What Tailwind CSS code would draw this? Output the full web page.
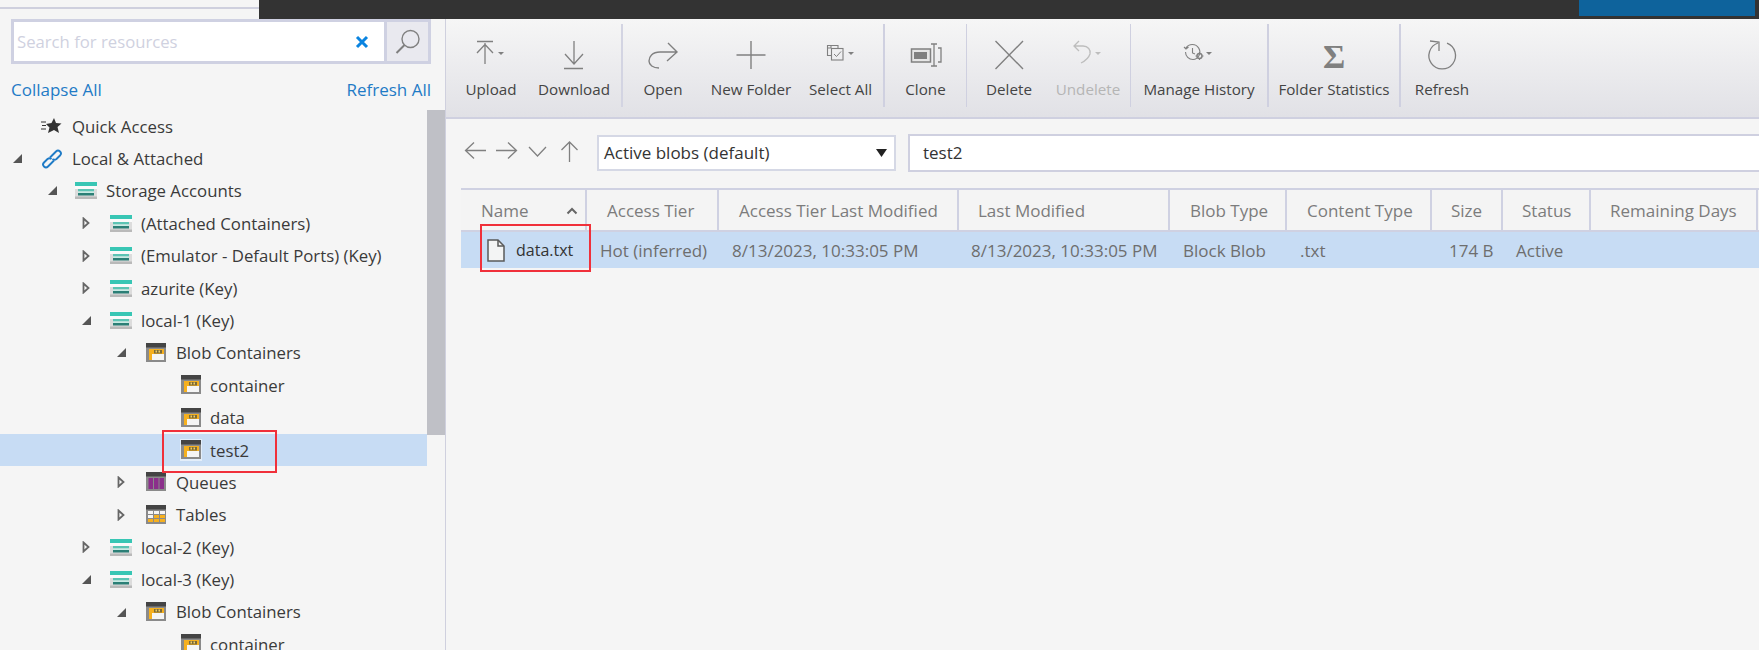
<!DOCTYPE html>
<html lang="en">
<head>
    <meta charset="UTF-8">
    <title>Storage Explorer</title>
    <script src="https://cdn.jsdelivr.net/npm/@tailwindcss/browser@4"></script>
</head>
<body class="bg-[#f5f5f5] font-['Open_Sans',sans-serif] text-[16.8px] text-[#3a3a3a]">
<svg class="hidden">
    <symbol id="storage" viewBox="0 0 22 17">
        <rect x="0" y="0" width="22" height="17" fill="#dcdcdc"/>
        <rect x="0" y="0" width="22" height="4" fill="#38c6b4"/>
        <rect x="0" y="4" width="22" height="3" fill="#fafafa"/>
        <rect x="3" y="7" width="16" height="2.500" fill="#5cc4b4"/>
        <rect x="3" y="9.500" width="16" height="1.500" fill="#c8ebe4"/>
        <rect x="3" y="11" width="16" height="2.500" fill="#2b7f76"/>
        <rect x="0" y="14.500" width="22" height="2.500" fill="#b9b9b9"/>
    </symbol>
    <symbol id="blob" viewBox="0 0 22 20">
        <rect x="1" y="0" width="20" height="19" fill="#8a8a8a"/>
        <rect x="1" y="0" width="20" height="4.500" fill="#444"/>
        <rect x="4" y="6" width="15" height="11" fill="#f6b01e"/>
        <rect x="7" y="11" width="12" height="6" fill="#f5f5f5"/>
        <rect x="9" y="7" width="8" height="3.500" fill="#7a6a3a"/>
        <rect x="10.500" y="7.500" width="1.500" height="2" fill="#f6d060"/>
        <rect x="13.500" y="7.500" width="1.500" height="2" fill="#f6d060"/>
    </symbol>
    <symbol id="open-caret" viewBox="0 0 9 9"><polygon points="9,0 9,9 0,9" fill="#555"/></symbol>
    <symbol id="closed-caret" viewBox="0 0 8 12"><polygon points="1.500,1.500 6.500,6 1.500,10.500" fill="#f5f5f5" stroke="#666" stroke-width="1.800"/></symbol>
</svg>

<div class="w-[1759px] h-[650px] overflow-hidden relative flex flex-col">
    <!-- title strip -->
    <div class="h-[19px] flex shrink-0">
        <div class="w-[259px] pt-[7px]"><div class="h-[2px] bg-[#cfd0de]"></div></div>
        <div class="flex-1 bg-[#333333] flex justify-end pr-[4px]">
            <div class="w-[176px] h-[16px] bg-[#0e639c]"></div>
        </div>
    </div>

    <div class="flex flex-1 min-h-0">
        <!-- sidebar -->
        <div class="w-[446px] shrink-0 border-r border-[#cfd0de] flex flex-col">
            <div class="flex ml-[11px] w-[420px] h-[45px] border-[3px] border-[#cfd1e2]">
                <div class="flex-1 bg-white flex items-center justify-between pl-[3px] pr-[15px]">
                    <span class="text-[#cfd1e0] text-[16.7px]">Search for resources</span>
                    <svg width="14" height="14" viewBox="0 0 14 14"><path d="M2 2 L12 12 M12 2 L2 12" stroke="#0a84e0" stroke-width="3"/></svg>
                </div>
                <div class="w-[44px] bg-[#e9e9ef] border-l-[3px] border-[#cfd1e2] flex items-center justify-center">
                    <svg width="28" height="28" viewBox="0 0 28 28" fill="none" stroke="#808080"><circle cx="16.500" cy="11" r="8.500" stroke-width="1.400"/><path d="M10.500 17 L2.500 25" stroke-width="2"/></svg>
                </div>
            </div>
            <div class="flex justify-between ml-[11px] w-[420px] mt-[13px] h-[26px] items-center text-[#1f7bc6] text-[17px]">
                <span>Collapse All</span><span>Refresh All</span>
            </div>
            <div class="flex flex-1 min-h-0 mt-[7px] overflow-hidden">
                <div class="w-[427px] shrink-0">
                    <div class="h-[32.4px] flex items-center pl-[41px]">
                        <svg class="w-[22px] h-[20px] mr-[9px]" viewBox="0 0 22 20"><path d="M0 6 H5 M1 9.500 H5 M0 13 H5" stroke="#333" stroke-width="1.100"/><polygon points="13,2 15,7 20.500,7.500 16.500,11 18,17 13,14 7,17 8.500,11.500 5,8 10.500,7" fill="#333"/></svg>
                        <span>Quick Access</span>
                    </div>
                    <div class="h-[32.4px] flex items-center pl-[13px]">
                        <svg class="w-[9px] h-[9px] mr-[19px]"><use href="#open-caret"/></svg>
                        <svg class="w-[22px] h-[22px] mr-[9px]" viewBox="0 0 22 22" fill="none" stroke="#1f7bc6" stroke-width="1.900"><path d="M9 9.500 L15 3.500 Q17 1.500 19 3.500 Q21 5.500 19 7.500 L15.500 11 Q13.500 12.500 11.500 11"/><path d="M13 12.500 L7 18.500 Q5 20.500 3 18.500 Q1 16.500 3 14.500 L6.500 11 Q8.500 9.500 10.500 11"/></svg>
                        <span>Local &amp; Attached</span>
                    </div>
                    <div class="h-[32.4px] flex items-center pl-[48px]">
                        <svg class="w-[9px] h-[9px] mr-[18px]"><use href="#open-caret"/></svg>
                        <svg class="w-[22px] h-[17px] mr-[9px]"><use href="#storage"/></svg>
                        <span>Storage Accounts</span>
                    </div>
                    <div class="h-[32.4px] flex items-center pl-[82px]">
                        <svg class="w-[8px] h-[12px] mr-[20px]"><use href="#closed-caret"/></svg>
                        <svg class="w-[22px] h-[17px] mr-[9px]"><use href="#storage"/></svg>
                        <span>(Attached Containers)</span>
                    </div>
                    <div class="h-[32.4px] flex items-center pl-[82px]">
                        <svg class="w-[8px] h-[12px] mr-[20px]"><use href="#closed-caret"/></svg>
                        <svg class="w-[22px] h-[17px] mr-[9px]"><use href="#storage"/></svg>
                        <span>(Emulator - Default Ports) (Key)</span>
                    </div>
                    <div class="h-[32.4px] flex items-center pl-[82px]">
                        <svg class="w-[8px] h-[12px] mr-[20px]"><use href="#closed-caret"/></svg>
                        <svg class="w-[22px] h-[17px] mr-[9px]"><use href="#storage"/></svg>
                        <span>azurite (Key)</span>
                    </div>
                    <div class="h-[32.4px] flex items-center pl-[82px]">
                        <svg class="w-[9px] h-[9px] mr-[19px]"><use href="#open-caret"/></svg>
                        <svg class="w-[22px] h-[17px] mr-[9px]"><use href="#storage"/></svg>
                        <span>local-1 (Key)</span>
                    </div>
                    <div class="h-[32.4px] flex items-center pl-[117px]">
                        <svg class="w-[9px] h-[9px] mr-[19px]"><use href="#open-caret"/></svg>
                        <svg class="w-[22px] h-[20px] mr-[9px]"><use href="#blob"/></svg>
                        <span>Blob Containers</span>
                    </div>
                    <div class="h-[32.4px] flex items-center pl-[180px]">
                        <svg class="w-[22px] h-[20px] mr-[8px]"><use href="#blob"/></svg>
                        <span>container</span>
                    </div>
                    <div class="h-[32.4px] flex items-center pl-[180px]">
                        <svg class="w-[22px] h-[20px] mr-[8px]"><use href="#blob"/></svg>
                        <span>data</span>
                    </div>
                    <div class="h-[32.4px] flex items-center pl-[180px] bg-[#c7dcf4]">
                        <svg class="w-[22px] h-[22px] mr-[8px] bg-white/50 py-[1px]"><use href="#blob"/></svg>
                        <span>test2</span>
                    </div>
                    <div class="h-[32.4px] flex items-center pl-[117px]">
                        <svg class="w-[8px] h-[12px] mr-[20px]"><use href="#closed-caret"/></svg>
                        <svg class="w-[22px] h-[20px] mr-[9px]" viewBox="0 0 22 20"><rect x="1" width="20" height="19" fill="#8a8a8a"/><rect x="1" width="20" height="4.500" fill="#444"/><rect x="3.500" y="6" width="4.500" height="11" fill="#8b2f8b"/><rect x="9" y="6" width="4.500" height="11" fill="#8b2f8b"/><rect x="14.500" y="6" width="4.500" height="11" fill="#8b2f8b"/></svg>
                        <span>Queues</span>
                    </div>
                    <div class="h-[32.4px] flex items-center pl-[117px]">
                        <svg class="w-[8px] h-[12px] mr-[20px]"><use href="#closed-caret"/></svg>
                        <svg class="w-[22px] h-[20px] mr-[9px]" viewBox="0 0 22 20"><rect x="1" width="20" height="19" fill="#8a8a8a"/><rect x="1" width="20" height="4.500" fill="#444"/><rect x="3" y="6" width="5" height="3" fill="#f5f5f5"/><rect x="9" y="6" width="5" height="3" fill="#f5f5f5"/><rect x="15" y="6" width="5" height="3" fill="#f5f5f5"/><rect x="3" y="10" width="5" height="3" fill="#f5f5f5"/><rect x="9" y="10" width="5" height="3" fill="#f6b01e"/><rect x="15" y="10" width="5" height="3" fill="#f6b01e"/><rect x="3" y="14" width="5" height="3" fill="#f6b01e"/><rect x="9" y="14" width="5" height="3" fill="#f6b01e"/><rect x="15" y="14" width="5" height="3" fill="#f6b01e"/></svg>
                        <span>Tables</span>
                    </div>
                    <div class="h-[32.4px] flex items-center pl-[82px]">
                        <svg class="w-[8px] h-[12px] mr-[20px]"><use href="#closed-caret"/></svg>
                        <svg class="w-[22px] h-[17px] mr-[9px]"><use href="#storage"/></svg>
                        <span>local-2 (Key)</span>
                    </div>
                    <div class="h-[32.4px] flex items-center pl-[82px]">
                        <svg class="w-[9px] h-[9px] mr-[19px]"><use href="#open-caret"/></svg>
                        <svg class="w-[22px] h-[17px] mr-[9px]"><use href="#storage"/></svg>
                        <span>local-3 (Key)</span>
                    </div>
                    <div class="h-[32.4px] flex items-center pl-[117px]">
                        <svg class="w-[9px] h-[9px] mr-[19px]"><use href="#open-caret"/></svg>
                        <svg class="w-[22px] h-[20px] mr-[9px]"><use href="#blob"/></svg>
                        <span>Blob Containers</span>
                    </div>
                    <div class="h-[32.4px] flex items-center pl-[180px]">
                        <svg class="w-[22px] h-[20px] mr-[8px]"><use href="#blob"/></svg>
                        <span>container</span>
                    </div>
                </div>
                <div class="w-[18px]"><div class="h-[325px] bg-[#bfc0c6]"></div></div>
            </div>
        </div>

        <!-- main -->
        <div class="flex-1 min-w-0 flex flex-col">
            <div class="h-[100px] shrink-0 border-b-2 border-[#cfd0e0] bg-gradient-to-b from-[#f6f6f6] to-[#e1e1e6] flex items-start pt-[5px] pl-[3px] text-[#444] text-[15.2px]">
                <div class="w-[84px] flex flex-col items-center">
                    <svg class="w-[40px] h-[42px] mt-[12px]" viewBox="0 0 40 42" fill="none" stroke="#808080" stroke-width="1.300"><path d="M6 5.500 H22 M14 7 V28 M6 17 L14 8.500 L22 17"/><polygon points="27,16 33,16 30,19" fill="#808080" stroke="none"/></svg>
                    <span>Upload</span>
                </div>
                <div class="w-[82px] flex flex-col items-center">
                    <svg class="w-[40px] h-[42px] mt-[12px]" viewBox="0 0 40 42" fill="none" stroke="#808080" stroke-width="1.300"><path d="M20 5 V28 M11 18 L20 28 L29 18 M10 32.500 H29"/></svg>
                    <span>Download</span>
                </div>
                <div class="w-[2px] h-[83px] ml-[6px] bg-[#d3d4e2]"></div>
                <div class="w-[80px] flex flex-col items-center">
                    <svg class="w-[40px] h-[42px] mt-[12px]" viewBox="0 0 40 42" fill="none" stroke="#808080" stroke-width="1.400"><path d="M25 7 L34 16 L24 25 M34 16 H17 C9 16 6 21 6 25 C6 29 10 32 16 32"/></svg>
                    <span>Open</span>
                </div>
                <div class="w-[96px] flex flex-col items-center">
                    <svg class="w-[40px] h-[42px] mt-[12px]" viewBox="0 0 40 42" fill="none" stroke="#808080" stroke-width="1.400"><path d="M5.500 19 H34.500 M20 5 V33"/></svg>
                    <span>New Folder</span>
                </div>
                <div class="w-[83px] flex flex-col items-center">
                    <svg class="w-[40px] h-[42px] mt-[12px]" viewBox="0 0 40 42" fill="none" stroke="#808080" stroke-width="1.100"><path d="M10 12.500 V9.500 H17 V12.500 M10 12 H6.500 V9.500 H10 M6.500 9.500 V19.500 H10"/><rect x="10.500" y="12.500" width="11.500" height="11.500"/><path d="M13 18 L15.500 20.500 L20 15.500" stroke-width="1"/><polygon points="27,16 33,16 30,19" fill="#808080" stroke="none"/></svg>
                    <span>Select All</span>
                </div>
                <div class="w-[2px] h-[83px] ml-[1px] bg-[#cfd0e0]"></div>
                <div class="w-[81px] flex flex-col items-center">
                    <svg class="w-[40px] h-[42px] mt-[12px]" viewBox="0 0 40 42" fill="none" stroke="#808080" stroke-width="1.300"><rect x="5.500" y="13" width="19" height="13" stroke-width="1.500" fill="#e6e6e6"/><rect x="8" y="16" width="13" height="7" fill="#808080" stroke="none"/><path d="M25 8 H31 M25 30 H31 M28 8 V30 M32 12 H35 V26 H32"/></svg>
                    <span>Clone</span>
                </div>
                <div class="w-[1px] h-[83px] bg-[#cfd0e0]"></div>
                <div class="w-[84px] flex flex-col items-center">
                    <svg class="w-[40px] h-[42px] mt-[12px]" viewBox="0 0 40 42" fill="none" stroke="#808080" stroke-width="1.400"><path d="M6.500 5 L34 33 M34 5 L6.500 33"/></svg>
                    <span>Delete</span>
                </div>
                <div class="w-[74px] flex flex-col items-center">
                    <svg class="w-[40px] h-[42px] mt-[12px]" viewBox="0 0 40 42" fill="none" stroke="#bdbdbd" stroke-width="1.300"><path d="M11 5 L6 10 L11 15 M6 10 H15 C20 10 23 14 22 18 C21 21 17 25 13 27"/><polygon points="27,16 33,16 30,19" fill="#bdbdbd" stroke="none"/></svg>
                    <span class="text-[#b5b5b5]">Undelete</span>
                </div>
                <div class="w-[1px] h-[83px] ml-[5px] bg-[#cfd0e0]"></div>
                <div class="w-[136px] flex flex-col items-center">
                    <svg class="w-[40px] h-[42px] mt-[12px]" viewBox="0 0 40 42" fill="none" stroke="#808080" stroke-width="1.100"><path d="M7 12 A7.500 7.500 0 1 1 14 23.500 A7.500 7.500 0 0 1 6.500 16 M5 11 L7 13 L9.500 11 M13.500 12 V17 L16 18"/><circle cx="20.500" cy="20" r="2.500" stroke-width="1.400"/><path d="M20.500 16 V17.500 M20.500 22.500 V24 M16.500 20 H18 M23 20 H24.500" stroke-width="1.200"/><polygon points="27,16 33,16 30,19" fill="#808080" stroke="none"/></svg>
                    <span>Manage History</span>
                </div>
                <div class="w-[2px] h-[83px] bg-[#cfd0e0]"></div>
                <div class="w-[130px] flex flex-col items-center">
                    <span class="h-[42px] mt-[12px] flex items-center text-[#808080] text-[34px] font-bold font-['Liberation_Serif',serif] -translate-y-[1px]">Σ</span>
                    <span>Folder Statistics</span>
                </div>
                <div class="w-[2px] h-[83px] bg-[#cfd0e0]"></div>
                <div class="w-[82px] flex flex-col items-center">
                    <svg class="w-[40px] h-[42px] mt-[12px]" viewBox="0 0 40 42" fill="none" stroke="#808080" stroke-width="1.300"><path d="M16 7 A13.300 13.300 0 1 0 25 7.200 M8 5 L17 6 L17 15"/></svg>
                    <span>Refresh</span>
                </div>
            </div>

            <div class="flex items-center pl-[14px] mt-[15px] h-[38px] shrink-0">
                <svg class="w-[130px] h-[36px]" viewBox="0 0 130 36" fill="none" stroke="#808080" stroke-width="1.300"><path d="M26 15.500 H6 M14 7.500 L5.500 15.500 L14 23.500"/><path d="M36 15.500 H56 M48 7.500 L56.500 15.500 L48 23.500"/><path d="M69 12 L77.500 21 L86 12"/><path d="M109.500 7 V27 M101.500 15 L109.500 7 L117.500 15"/></svg>
                <div class="w-[299px] h-[36px] ml-[7px] bg-white border-2 border-[#d5d8e5] flex items-center justify-between pl-[5px] pr-[7px] text-[#333] text-[17px]">
                    <span>Active blobs (default)</span>
                    <svg width="11" height="8" viewBox="0 0 11 8"><polygon points="0,0 11,0 5.500,8" fill="#222"/></svg>
                </div>
                <div class="flex-1 h-[38px] ml-[12px] bg-white border-2 border-r-0 border-[#cfd0e0] flex items-center pl-[13px] text-[#333] text-[17px]">test2</div>
            </div>

            <div class="mt-[16px] ml-[15px] flex h-[44px] shrink-0 border-y-2 border-[#cfd1e2] text-[#7c7c7c] text-[17px] bg-[#f4f4f4]">
                <div class="w-[126px] pl-[20px] pr-[7px] pt-[1px] flex items-center justify-between border-r-2 border-[#cfd1e2]">
                    <span>Name</span>
                    <svg width="12" height="8" viewBox="0 0 12 8" fill="none" stroke="#666" stroke-width="2"><path d="M1.500 6.500 L6 2 L10.500 6.500"/></svg>
                </div>
                <div class="w-[132px] pl-[20px] pt-[1px] flex items-center border-r-2 border-[#cfd1e2]">Access Tier</div>
                <div class="w-[240px] pl-[20px] pt-[1px] flex items-center border-r-2 border-[#cfd1e2]">Access Tier Last Modified</div>
                <div class="w-[211px] pl-[19px] pt-[1px] flex items-center border-r-2 border-[#cfd1e2]">Last Modified</div>
                <div class="w-[117px] pl-[20px] pt-[1px] flex items-center border-r-2 border-[#cfd1e2]">Blob Type</div>
                <div class="w-[145px] pl-[20px] pt-[1px] flex items-center border-r-2 border-[#cfd1e2]">Content Type</div>
                <div class="w-[71px] pl-[19px] pt-[1px] flex items-center border-r-2 border-[#cfd1e2]">Size</div>
                <div class="w-[88px] pl-[19px] pt-[1px] flex items-center border-r-2 border-[#cfd1e2]">Status</div>
                <div class="w-[167px] pl-[19px] pt-[1px] flex items-center border-r-2 border-[#cfd1e2]">Remaining Days</div>
            </div>
            <div class="ml-[15px] flex h-[36px] shrink-0 bg-[#c7dcf4] text-[#6e6e6e] text-[17px] items-center">
                <div class="w-[125px] pl-[25px] flex items-center text-[#333]">
                    <svg class="w-[20px] h-[25px] mr-[10px]" viewBox="0 0 20 25" fill="#f3f4f4" stroke="#5a5a5a" stroke-width="1.500"><path d="M2 2 H12 L18 8 V23 H2 Z"/><path d="M12 2 V8 H18" fill="none"/></svg>
                    <span class="text-[16px]">data.txt</span>
                </div>
                <div class="w-[132px] pl-[14px] pt-[1px]">Hot (inferred)</div>
                <div class="w-[240px] pl-[14px] pt-[1px]">8/13/2023, 10:33:05 PM</div>
                <div class="w-[211px] pl-[13px] pt-[1px]">8/13/2023, 10:33:05 PM</div>
                <div class="w-[117px] pl-[14px] pt-[1px]">Block Blob</div>
                <div class="w-[145px] pl-[14px] pt-[1px]">.txt</div>
                <div class="w-[71px] pl-[18px] pt-[1px]">174 B</div>
                <div class="w-[88px] pl-[14px] pt-[1px]">Active</div>
            </div>
        </div>
    </div>

    <!-- red annotation boxes drawn over the screenshot -->
    <div class="absolute left-[162px] top-[430px] w-[115px] h-[43px] border-2 border-[#f0303a]"></div>
    <div class="absolute left-[480px] top-[224px] w-[111px] h-[48px] border-2 border-[#f0303a]"></div>
</div>
</body>
</html>
